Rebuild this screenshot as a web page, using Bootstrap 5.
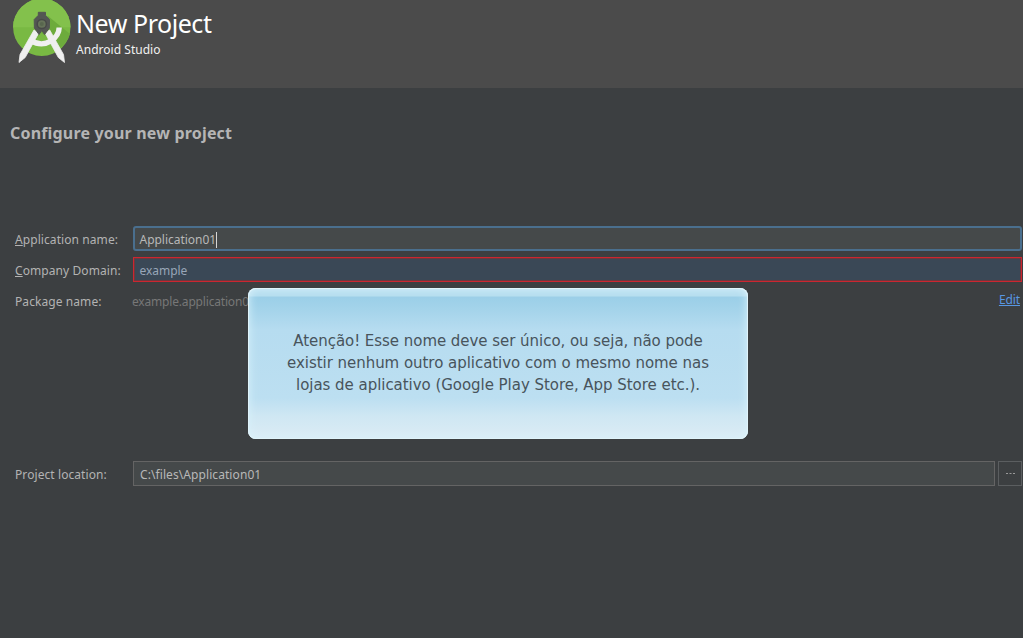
<!DOCTYPE html>
<html lang="pt-BR">
<head>
<meta charset="utf-8">
<meta name="viewport" content="width=device-width, initial-scale=1">
<title>New Project</title>
<link href="https://cdn.jsdelivr.net/npm/bootstrap@5.3.0/dist/css/bootstrap.min.css" rel="stylesheet">
<style>
body{background:#3c3f41;color:#b3b3b3;font:12px/16px "Noto Sans","Open Sans",sans-serif;letter-spacing:.08px;height:638px}
.wizard-head{height:88px;background:#4b4b4b;color:#fff;padding-left:11px}
.wizard-head h1{font-size:25px;line-height:32px;font-weight:400;letter-spacing:-.45px;padding-top:7px}
.wizard-head p{font-size:12px;line-height:16px;letter-spacing:.03px;padding-top:3px;color:#f0f0f0}
.step-title{font-size:16px;line-height:22px;font-weight:700;color:#b5b5b5;letter-spacing:.18px;margin:34px 0 0 10px}
.setup-form{margin-top:82px;padding-right:1px}
.form-line{height:25px;margin-bottom:6px}
.form-line label{width:133px;padding:2px 0 0 15px;flex:none}
.form-line .form-control{height:25px;border-radius:0;padding:2px 6px 0;font-size:12px;line-height:16px;letter-spacing:-.03px;background:#45494a;border:1px solid #646464;color:#b8b8b8;display:flex;align-items:center}
.form-line .field-focus{border:2px solid #4a6f8e;border-radius:3px;padding-left:4.5px}
.form-line .field-error{border:1px solid #cc2630;outline:1px solid #6e373d;outline-offset:-2px;background:#3a4856;color:#98a6b8;padding-left:5.5px}
.caret{width:1px;height:16px;background:#d5d5d5}
.pkg{color:#777;padding-top:2px;margin-left:-1px;letter-spacing:-.18px}
.edit-link{color:#5897e2;margin-right:2px;margin-top:-2px;letter-spacing:-.1px}
.location-line{margin-top:148px}
.location-line label{padding-top:2px}
.form-line .location-box{padding-top:2px;letter-spacing:.08px}
.browse-btn.btn{width:24px;height:25px;border:1px solid #5b5e60;border-radius:0;color:#aaa;padding:0;margin-left:3px;flex:none}
.notice{left:248px;top:288px;width:500px;height:151px;border-radius:8px;color:#48545c;background:linear-gradient(#b5ddef 0,#b5ddef 8px,#9bcfe8 9px,#a3d3ea 20px,#b6dcf0 42px,#bcdff1 110px,#cfe7f3 128px,#dcecf5 151px);box-shadow:inset 0 0 0 1px #e0f4fb,inset 0 0 8px 1px #d9f2fb;font:15px/22px "DejaVu Sans",sans-serif;letter-spacing:-.04px;padding-top:42px}
</style>
<script src="https://cdn.jsdelivr.net/npm/bootstrap@5.3.0/dist/js/bootstrap.bundle.min.js"></script>
</head>
<body class="position-relative overflow-hidden">
<header class="wizard-head d-flex">
  <svg width="65" height="65" viewBox="11 0 65 65" aria-hidden="true" class="flex-shrink-0">
    <circle cx="41.8" cy="27.3" r="28.7" fill="#79b943"/>
    <path d="M13.1 27.3a28.7 28.7 0 0 1 57.4 0z" fill="#83c14c"/>
    <path d="M48 16 70 34a28.7 28.7 0 0 1-10 14L38 30z" fill="#6dab3c"/>
    <path d="M41 32 29 52h-5l13-20z" fill="#6dab3c"/>
    <path d="M31 40.5Q41 47 51 41 59 35.5 59.2 27.5" fill="none" stroke="#f0f0f0" stroke-width="5.4"/>
    <path d="M34 30 38.8 33 25.2 57.5 19 62.5 20 54.5zM49.7 30 45 33 58.3 57.5 64.5 62.5 63.5 54.5z" fill="#efefef" stroke="#efefef" stroke-width=".8" stroke-linejoin="round"/>
    <path d="M38.3 12.3h7.2v3l4 4.2-.2 8.5-4.7 6.5-2.8-4-2.8 4-4.6-6.5-.2-8.5 4.1-4.2z" fill="#535653" stroke="#535653" stroke-width="1" stroke-linejoin="round"/>
    <circle cx="41.8" cy="24" r="4.6" fill="#667359" stroke="#474947" stroke-width="1.5"/>
    <circle cx="41.8" cy="24" r="2" fill="#58664e"/>
  </svg>
  <div>
    <h1 class="m-0">New Project</h1>
    <p class="m-0">Android Studio</p>
  </div>
</header>
<main>
  <h2 class="step-title">Configure your new project</h2>
  <form class="setup-form">
    <div class="form-line d-flex align-items-center"><label><u>A</u>pplication name:</label><div class="form-control field-focus"><span>Application01</span><i class="caret"></i></div></div>
    <div class="form-line d-flex align-items-center"><label><u>C</u>ompany Domain:</label><div class="form-control field-error">example</div></div>
    <div class="form-line d-flex align-items-center"><label>Package name:</label><span class="pkg">example.application01</span><a href="#" class="edit-link ms-auto">Edit</a></div>
    <div class="form-line location-line d-flex align-items-center"><label>Project location:</label><div class="form-control location-box">C:\files\Application01</div><button type="button" class="browse-btn btn d-flex align-items-center justify-content-center" aria-label="Browse"><svg width="9" height="3" viewBox="0 0 9 3"><path d="M0 1h2v1H0zM3.5 1h2v1h-2zM7 1h2v1H7z" fill="#999"/></svg></button></div>
  </form>
</main>
<aside class="notice position-absolute text-center" role="alert">Atenção! Esse nome deve ser único, ou seja, não pode<br>existir nenhum outro aplicativo com o mesmo nome nas<br>lojas de aplicativo (Google Play Store, App Store etc.).</aside>
</body>
</html>
